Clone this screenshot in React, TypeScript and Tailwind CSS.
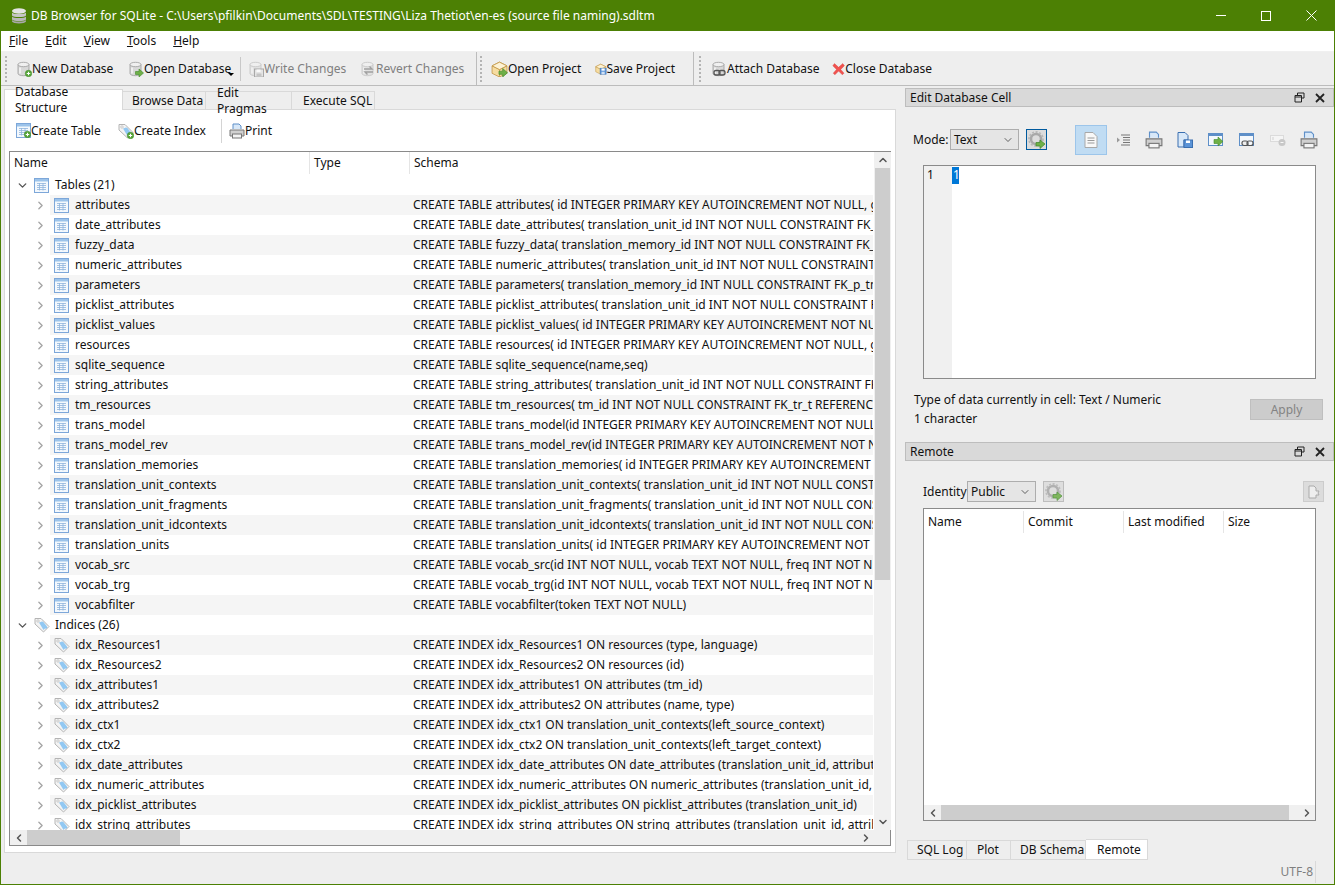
import React from "react";
import { ChevronDown, ChevronRight, ChevronLeft, ChevronUp } from "lucide-react";

// small icon parts
const PlusBadge = () => (
	<g>
		<circle cx="12.5" cy="12.5" r="3.2" fill="#5aa83c" stroke="#3f8a2a" strokeWidth="0.6" />
		<path d="M12.5 10.8v3.4M10.8 12.5h3.4" stroke="#fff" strokeWidth="1" />
	</g>
);
const ArrowBadge = () => (
	<path d="M7.5 10.5h3.5V8l4.5 4-4.500 4v-2.500H7.500z" fill="#6fb048" stroke="#3f8a2a" strokeWidth="0.6" />
);
const Cylinder = ({ faded = false }: { faded?: boolean }) => (
	<g opacity={faded ? 0.5 : 1}>
		<path d="M2 3.500v9c0 1.300 2.500 2.200 5.500 2.200s5.500-.9 5.500-2.200v-9z" fill="#d8d8d8" stroke="#9a9a9a" strokeWidth="0.8" />
		<ellipse cx="7.500" cy="3.500" rx="5.500" ry="2.200" fill="#f0f0f0" stroke="#9a9a9a" strokeWidth="0.8" />
		<path d="M4 6.500v6" stroke="#fff" strokeWidth="1.200" />
	</g>
);
const NewDbIcon = () => (
	<svg width="16" height="16" viewBox="0 0 16 16"><Cylinder /><PlusBadge /></svg>
);
const OpenDbIcon = () => (
	<svg width="16" height="16" viewBox="0 0 16 16"><Cylinder /><ArrowBadge /></svg>
);
const WriteIcon = () => (
	<svg width="16" height="16" viewBox="0 0 16 16">
		<Cylinder faded />
		<rect x="6.500" y="8" width="9" height="8" fill="#e4e4e4" stroke="#a8a8a8" />
		<rect x="8.500" y="8.500" width="4" height="2.500" fill="#fafafa" />
		<rect x="8.500" y="12.500" width="5" height="3" fill="#c4c4c4" />
	</svg>
);
const RevertIcon = () => (
	<svg width="16" height="16" viewBox="0 0 16 16">
		<Cylinder faded />
		<path d="M4 8h8l-2.500-2.500M13 11H5l2.500 2.500" fill="none" stroke="#a0a0a0" strokeWidth="1.400" />
	</svg>
);
const BoxBase = () => (
	<g>
		<path d="M1 5.500 8 2l7 3.500v7L8 16l-7-3.500z" fill="#f6dca0" stroke="#c49a4a" strokeWidth="0.8" />
		<path d="M1 5.500 8 9l7-3.500M8 9v7" fill="none" stroke="#c49a4a" strokeWidth="0.8" />
		<path d="M1 5.500 8 2l7 3.500L8 9z" fill="#fdf2d4" stroke="#c49a4a" strokeWidth="0.8" />
	</g>
);
const OpenProjectIcon = () => (
	<svg width="17" height="17" viewBox="0 0 16 16"><BoxBase /><ArrowBadge /></svg>
);
const SaveProjectIcon = () => (
	<svg width="17" height="17" viewBox="0 0 16 16">
		<BoxBase />
		<rect x="7" y="7.500" width="8.500" height="8.500" fill="#5b93d6" stroke="#3a6fb0" strokeWidth="0.6" />
		<rect x="9" y="8" width="4.500" height="3" fill="#fff" />
		<rect x="9" y="12.500" width="4.500" height="3.500" fill="#cfe0f4" />
	</svg>
);
const AttachIcon = () => (
	<svg width="16" height="16" viewBox="0 0 16 16">
		<Cylinder />
		<rect x="3" y="9.500" width="6" height="4.500" rx="2" fill="none" stroke="#555" strokeWidth="1.300" />
		<rect x="8" y="9.500" width="6" height="4.500" rx="2" fill="none" stroke="#555" strokeWidth="1.300" />
	</svg>
);
const CloseIcon = () => (
	<svg width="16" height="16" viewBox="0 0 16 16">
		<path d="M3 1.500 8 6l5-4.500L15 4l-4.500 4.500L14.500 13 12.500 15 8 10.500 3.500 15 1.500 13 5.500 8.500 1 4z" fill="#f0524f" stroke="#d8403c" strokeWidth="0.5" />
	</svg>
);
const TableIcon = ({ plus = false }: { plus?: boolean }) => (
	<svg width="15" height="15" viewBox="0 0 15 15" className="shrink-0">
		<rect x="0.500" y="0.500" width="14" height="14" fill="#f3f8fd" stroke="#7da7d9" />
		<rect x="1" y="1" width="13" height="2.500" fill="#9cc3ea" />
		<path d="M3 5.500h9M3 7.500h9M3 9.500h9M3 11.500h9M5.500 5v7.500M9 5v7.500" stroke="#8fb4dc" strokeWidth="0.800" fill="none" />
		{plus && (
			<g>
				<circle cx="11.500" cy="11.500" r="3.200" fill="#5aa83c" stroke="#3f8a2a" strokeWidth="0.600" />
				<path d="M11.500 9.800v3.400M9.800 11.500h3.400" stroke="#fff" />
			</g>
		)}
	</svg>
);
const TagIcon = ({ plus = false }: { plus?: boolean }) => (
	<svg width="16" height="16" viewBox="0 0 16 16" className="shrink-0">
		<path d="M1 1.500h6l8 8-5.500 5.500-8.500-8z" fill="#f4f4f4" stroke="#b4b4b4" />
		<path d="M6 6l6 6 1.500-1.500-6-6z" fill="#8ec4f0" />
		<path d="M5 5.500 9 4.500l4 5-3.500 3.500z" fill="#92c8f2" />
		<circle cx="4" cy="4" r="1.200" fill="#fff" stroke="#a8a8a8" strokeWidth="0.600" />
		{plus && <PlusBadge />}
	</svg>
);
const PrintIcon = ({ size = 16 }: { size?: number }) => (
	<svg width={size} height={size} viewBox="0 0 16 16" className="shrink-0">
		<path d="M4 6V1h6l2 2v3" fill="#d8e8f8" stroke="#5e8fc8" />
		<path d="M1 7h14v6H1z" fill="#d0d0d0" stroke="#777" />
		<rect x="3.500" y="11" width="9" height="4" fill="#f4f4f4" stroke="#777" />
	</svg>
);
const GearIcon = ({ faded = false }: { faded?: boolean }) => (
	<svg width="18" height="18" viewBox="0 0 18 18" opacity={faded ? 0.85 : 1}>
		<circle cx="8" cy="8" r="5" fill="none" stroke="#a8a8a8" strokeWidth="2.500" />
		<circle cx="8" cy="8" r="7" fill="none" stroke="#b8b8b8" strokeWidth="1.800" strokeDasharray="2 1.600" />
		<path d="M8 11.500h4V9l5 4-5 4.500V15H8z" fill="#6fb048" stroke="#3f8a2a" strokeWidth="0.700" />
	</svg>
);
const Grip = () => (
	<div className="w-[3px] h-[26px] border-l-[2px] border-dotted border-[#b4b4b4] shrink-0" />
);

const font = "font-['Noto_Sans',sans-serif]";

const ToolItem = ({ icon, label, w, off = false }: { icon: React.ReactNode; label: string; w: string; off?: boolean }) => (
	<div className={`flex items-center shrink-0 ${w} ${off ? "text-[#7f7f7f]" : "text-[#111]"}`}>
		{icon}
		<span className="whitespace-nowrap">{label}</span>
	</div>
);

const tables: [string, string][] = [
	["attributes", "CREATE TABLE attributes( id INTEGER PRIMARY KEY AUTOINCREMENT NOT NULL, guid BLOB NOT NULL"],
	["date_attributes", "CREATE TABLE date_attributes( translation_unit_id INT NOT NULL CONSTRAINT FK_da_tu REFERENCES"],
	["fuzzy_data", "CREATE TABLE fuzzy_data( translation_memory_id INT NOT NULL CONSTRAINT FK_fi1_tm REFERENCES"],
	["numeric_attributes", "CREATE TABLE numeric_attributes( translation_unit_id INT NOT NULL CONSTRAINT FK_na_tu REFERENCES"],
	["parameters", "CREATE TABLE parameters( translation_memory_id INT NULL CONSTRAINT FK_p_tm REFERENCES"],
	["picklist_attributes", "CREATE TABLE picklist_attributes( translation_unit_id INT NOT NULL CONSTRAINT FK_pa_tu REFERENCES"],
	["picklist_values", "CREATE TABLE picklist_values( id INTEGER PRIMARY KEY AUTOINCREMENT NOT NULL, guid BLOB NOT NULL"],
	["resources", "CREATE TABLE resources( id INTEGER PRIMARY KEY AUTOINCREMENT NOT NULL, guid BLOB NOT NULL"],
	["sqlite_sequence", "CREATE TABLE sqlite_sequence(name,seq)"],
	["string_attributes", "CREATE TABLE string_attributes( translation_unit_id INT NOT NULL CONSTRAINT FK_sa_tu REFERENCES"],
	["tm_resources", "CREATE TABLE tm_resources( tm_id INT NOT NULL CONSTRAINT FK_tr_t REFERENCES translation_memories"],
	["trans_model", "CREATE TABLE trans_model(id INTEGER PRIMARY KEY AUTOINCREMENT NOT NULL, source_id INT NOT NULL"],
	["trans_model_rev", "CREATE TABLE trans_model_rev(id INTEGER PRIMARY KEY AUTOINCREMENT NOT NULL, source_id INT NOT NULL"],
	["translation_memories", "CREATE TABLE translation_memories( id INTEGER PRIMARY KEY AUTOINCREMENT NOT NULL, guid BLOB"],
	["translation_unit_contexts", "CREATE TABLE translation_unit_contexts( translation_unit_id INT NOT NULL CONSTRAINT FK_tuc REFERENCES"],
	["translation_unit_fragments", "CREATE TABLE translation_unit_fragments( translation_unit_id INT NOT NULL CONSTRAINT FK_tuf REFERENCES"],
	["translation_unit_idcontexts", "CREATE TABLE translation_unit_idcontexts( translation_unit_id INT NOT NULL CONSTRAINT FK_tui REFERENCES"],
	["translation_units", "CREATE TABLE translation_units( id INTEGER PRIMARY KEY AUTOINCREMENT NOT NULL, guid BLOB NOT NULL"],
	["vocab_src", "CREATE TABLE vocab_src(id INT NOT NULL, vocab TEXT NOT NULL, freq INT NOT NULL)"],
	["vocab_trg", "CREATE TABLE vocab_trg(id INT NOT NULL, vocab TEXT NOT NULL, freq INT NOT NULL)"],
	["vocabfilter", "CREATE TABLE vocabfilter(token TEXT NOT NULL)"],
];

const indices: [string, string][] = [
	["idx_Resources1", "CREATE INDEX idx_Resources1 ON resources (type, language)"],
	["idx_Resources2", "CREATE INDEX idx_Resources2 ON resources (id)"],
	["idx_attributes1", "CREATE INDEX idx_attributes1 ON attributes (tm_id)"],
	["idx_attributes2", "CREATE INDEX idx_attributes2 ON attributes (name, type)"],
	["idx_ctx1", "CREATE INDEX idx_ctx1 ON translation_unit_contexts(left_source_context)"],
	["idx_ctx2", "CREATE INDEX idx_ctx2 ON translation_unit_contexts(left_target_context)"],
	["idx_date_attributes", "CREATE INDEX idx_date_attributes ON date_attributes (translation_unit_id, attribute_id)"],
	["idx_numeric_attributes", "CREATE INDEX idx_numeric_attributes ON numeric_attributes (translation_unit_id, attribute_id)"],
	["idx_picklist_attributes", "CREATE INDEX idx_picklist_attributes ON picklist_attributes (translation_unit_id)"],
	["idx_string_attributes", "CREATE INDEX idx_string_attributes ON string_attributes (translation_unit_id, attribute_id)"],
];

const GroupRow = ({ icon, label }: { icon: React.ReactNode; label: string }) => (
	<div className="h-5 flex items-center">
		<div className="w-[24px] flex justify-center pl-[-1px] shrink-0">
			<ChevronDown size={13} strokeWidth={2.500} className="text-[#555]" />
		</div>
		<div className="w-[21px] flex shrink-0">{icon}</div>
		<span>{label}</span>
	</div>
);

const ChildRow = ({ icon, name, schema, shaded }: { icon: React.ReactNode; name: string; schema: string; shaded: boolean }) => (
	<div className="h-5 flex items-center">
		<div className="w-[40px] flex justify-end pr-[3px] shrink-0">
			<ChevronRight size={13} strokeWidth={2.500} className="text-[#a6a6a6]" />
		</div>
		<div className={`w-[823px] h-5 flex items-center pl-[4px] overflow-hidden ${shaded ? "bg-[#f5f5f5]" : ""}`}>
			<div className="w-[21px] shrink-0 flex">{icon}</div>
			<div className="w-[338px] shrink-0 whitespace-nowrap">{name}</div>
			<div className="whitespace-nowrap">{schema}</div>
		</div>
	</div>
);

const HScroll = ({ thumb, gap }: { thumb: string; gap: string }) => (
	<div className="h-[15px] flex items-center bg-[#f0f0f0] shrink-0">
		<div className="w-[17px] flex justify-center shrink-0">
			<ChevronLeft size={12} strokeWidth={3} className="text-[#555]" />
		</div>
		<div className={`h-[15px] bg-[#cdcdcd] shrink-0 ${thumb}`} />
		<div className={gap} />
		<div className="w-[17px] flex justify-center shrink-0">
			<ChevronRight size={12} strokeWidth={3} className="text-[#555]" />
		</div>
	</div>
);

const DockHeader = ({ title }: { title: string }) => (
	<div className="h-[19px] bg-[#d9d9d9] border border-[#bdbdbd] flex items-center pl-[4px] shrink-0">
		<span className="flex-1 text-[#111]">{title}</span>
		<svg width="11" height="11" viewBox="0 0 11 11" className="mr-[10px]">
			<path d="M3.500 3V1h6.500v5H7.500M1 3.500h6.500V10H1zM1 5h6.500" fill="none" stroke="#222" />
		</svg>
		<svg width="10" height="10" viewBox="0 0 10 10" className="mr-[8px]">
			<path d="M1 1l8 8M9 1l-8 8" stroke="#222" strokeWidth="1.800" />
		</svg>
	</div>
);

const Combo = ({ label }: { label: string }) => (
	<div className="w-[69px] h-[21px] border border-[#adadad] bg-[#e5e5e5] flex items-center pl-[3px] shrink-0">
		<span className="flex-1 text-[#111]">{label}</span>
		<ChevronDown size={12} strokeWidth={1.500} className="mr-[4px] text-[#333]" />
	</div>
);

const HeaderCell = ({ w, label }: { w: string; label: string }) => (
	<div className={`${w} h-[22px] border-r border-[#e5e5e5] pl-[4px] flex items-center shrink-0`}>{label}</div>
);

const CellBtn = ({ children }: { children: React.ReactNode }) => (
	<div className="w-[31px] flex justify-center shrink-0">{children}</div>
);

export default function App() {
	return (
		<div className={`${font} w-[1335px] h-[885px] overflow-hidden bg-[#eeeeee] text-[12px] leading-[16px] text-[#111] border-x border-b border-[#4c8004] flex flex-col`}>
			{/* Title bar */}
			<div className="h-[31px] bg-[#4c8004] flex items-center text-white shrink-0">
				<svg width="18" height="18" viewBox="0 0 18 18" className="ml-[9px] mr-[3px]">
					<ellipse cx="9" cy="4" rx="7" ry="2.800" fill="#e4e4e4" />
					<path d="M2 5.500c1 2 13 2 14 0v3c-1 2-13 2-14 0z" fill="#c6c6c6" />
					<path d="M2 9.500c1 2 13 2 14 0v3c-1 2-13 2-14 0z" fill="#b8b8b8" />
					<path d="M2 13c1 2 13 2 14 0v1.500c-1 2.500-13 2.500-14 0z" fill="#a8a8a8" />
				</svg>
				<span className="whitespace-nowrap flex-1">DB Browser for SQLite - C:\Users\pfilkin\Documents\SDL\TESTING\Liza Thetiot\en-es (source file naming).sdltm</span>
				<div className="w-[45px] flex justify-center"><div className="w-[10px] h-px bg-white" /></div>
				<div className="w-[45px] flex justify-center"><div className="w-[10px] h-[10px] border border-white" /></div>
				<div className="w-[46px] flex justify-center">
					<svg width="11" height="11" viewBox="0 0 11 11"><path d="M.5.500l10 10M10.500.500l-10 10" stroke="#fff" /></svg>
				</div>
			</div>

			{/* Menu */}
			<div className="h-[21px] bg-white flex items-center gap-[17px] pl-[8px] border-b border-[#f0f0f0] shrink-0 text-[#111]">
				<span><u>F</u>ile</span>
				<span><u>E</u>dit</span>
				<span><u>V</u>iew</span>
				<span><u>T</u>ools</span>
				<span><u>H</u>elp</span>
			</div>

			{/* Toolbars */}
			<div className="h-[34px] flex items-center border-b border-[#bcbcbc] shrink-0">
				<div className="w-[693px] h-full flex items-center border-r border-[#bcbcbc] shrink-0">
					<div className="pl-[4px] w-[15px] shrink-0"><Grip /></div>
					<ToolItem icon={<NewDbIcon />} label="New Database" w="w-[112px]" />
					<div className="w-[112px] flex items-center shrink-0 relative">
						<OpenDbIcon />
						<span className="whitespace-nowrap">Open Database</span>
						<div className="absolute left-[100px] top-[12px] border-x-[3px] border-t-[3px] border-x-transparent border-t-black" />
					</div>
					<div className="w-px h-[24px] bg-[#c8c8c8] mr-[7px] shrink-0" />
					<ToolItem icon={<WriteIcon />} label="Write Changes" w="w-[112px]" off />
					<ToolItem icon={<RevertIcon />} label="Revert Changes" w="w-[116px]" off />
					<div className="w-px h-[33px] bg-[#bcbcbc] shrink-0" />
					<div className="pl-[3px] w-[14px] shrink-0"><Grip /></div>
					<ToolItem icon={<OpenProjectIcon />} label="Open Project" w="w-[104px]" />
					<ToolItem icon={<SaveProjectIcon />} label="Save Project" w="w-[80px]" />
				</div>
				<div className="pl-[5px] w-[17px] shrink-0"><Grip /></div>
				<ToolItem icon={<AttachIcon />} label="Attach Database" w="w-[121px]" />
				<ToolItem icon={<CloseIcon />} label="Close Database" w="w-[100px]" />
			</div>

			{/* Main */}
			<div className="flex-1 flex min-h-0">
				{/* Left pane */}
				<div className="w-[892px] ml-[3px] mt-[3px] shrink-0 flex flex-col">
					<div className="flex items-end h-[21px] relative z-10">
						<div className="w-[119px] h-[21px] bg-white border border-[#d9d9d9] border-b-0 pl-[10px] flex items-center shrink-0">Database Structure</div>
						<div className="w-[83px] h-[19px] border border-l-0 border-[#d9d9d9] pl-[9px] flex items-center shrink-0">Browse Data</div>
						<div className="w-[86px] h-[19px] border border-l-0 border-[#d9d9d9] pl-[11px] flex items-center shrink-0">Edit Pragmas</div>
						<div className="w-[83px] h-[19px] border border-l-0 border-[#d9d9d9] pl-[11px] flex items-center shrink-0">Execute SQL</div>
					</div>
					<div className="h-[744px] -mt-px bg-white border border-[#d9d9d9] px-[4px] pb-[6px] flex flex-col">
						{/* Structure toolbar */}
						<div className="h-[41px] flex items-center shrink-0 pl-[7px]">
							<ToolItem icon={<TableIcon plus />} label="Create Table" w="w-[102px]" />
							<div className="w-[103px] flex items-center shrink-0"><TagIcon plus /><span className="whitespace-nowrap">Create Index</span></div>
							<div className="w-px h-[24px] bg-[#d4d4d4] mr-[7px] shrink-0" />
							<ToolItem icon={<PrintIcon />} label="Print" w="w-[50px]" />
						</div>
						{/* Tree */}
						<div className="flex-1 border border-[#8a8a8a] flex flex-col min-h-0">
							<div className="flex-1 flex min-h-0">
								<div className="w-[864px] shrink-0 flex flex-col min-h-0">
									<div className="flex h-[23px] shrink-0">
										<HeaderCell w="w-[300px]" label="Name" />
										<HeaderCell w="w-[100px]" label="Type" />
										<div className="pl-[4px] h-[22px] flex items-center">Schema</div>
									</div>
									<div className="flex-1 overflow-hidden">
										<GroupRow icon={<TableIcon />} label="Tables (21)" />
										{tables.map(([n, s], i) => (
											<ChildRow key={n} icon={<TableIcon />} name={n} schema={s} shaded={i % 2 === 0} />
										))}
										<GroupRow icon={<TagIcon />} label="Indices (26)" />
										{indices.map(([n, s], i) => (
											<ChildRow key={n} icon={<TagIcon />} name={n} schema={s} shaded={i % 2 === 0} />
										))}
									</div>
								</div>
								<div className="w-[17px] shrink-0 bg-[#f0f0f0] flex flex-col items-center">
									<div className="h-[16px] flex items-center"><ChevronUp size={12} strokeWidth={3} className="text-[#555]" /></div>
									<div className="w-[15px] h-[412px] bg-[#cdcdcd]" />
									<div className="flex-1" />
									<div className="h-[16px] flex items-center"><ChevronDown size={12} strokeWidth={3} className="text-[#555]" /></div>
								</div>
							</div>
							<HScroll thumb="w-[153px]" gap="w-[677px]" />
						</div>
					</div>
				</div>

				{/* Right docks */}
				<div className="w-[429px] ml-[9px] mt-[2px] shrink-0 flex flex-col">
					<DockHeader title="Edit Database Cell" />
					<div className="h-[335px] pl-[18px] pr-[9px] flex flex-col shrink-0">
						<div className="h-[41px] -ml-[10px] flex items-center mt-[12px] shrink-0">
							<span className="w-[37px] shrink-0">Mode:</span>
							<Combo label="Text" />
							<div className="w-[21px] h-[21px] ml-[7px] border border-[#005a9e] bg-[#dcdcdc] flex items-center justify-center shrink-0"><GearIcon /></div>
							<div className="w-[32px] h-[30px] ml-[28px] bg-[#c0dcf3] border border-[#9cc5ea] flex items-center justify-center shrink-0">
								<svg width="14" height="16" viewBox="0 0 14 16"><path d="M1 .5h8l4 4v11H1z" fill="#f8f8f8" stroke="#a8a8a8" /><path d="M3.500 6h7M3.500 8.500h7M3.500 11h7" stroke="#9a9a9a" /></svg>
							</div>
							<CellBtn>
								<svg width="14" height="12" viewBox="0 0 14 12"><path d="M5 1h9M7 3.500h7M7 6h7M7 8.500h7M5 11h9" stroke="#777" /><path d="M1 3.500 4 6 1 8.500z" fill="#9a9a9a" /></svg>
							</CellBtn>
							<CellBtn><PrintIcon size={18} /></CellBtn>
							<CellBtn>
								<svg width="16" height="16" viewBox="0 0 16 16"><path d="M1 .5h7l3 3V8H7v7H1z" fill="#d8e8f8" stroke="#3a6fb0" /><rect x="7" y="8" width="8.500" height="7.500" fill="#5b93d6" stroke="#3a6fb0" /><rect x="9" y="8.500" width="4" height="2.500" fill="#fff" /></svg>
							</CellBtn>
							<CellBtn>
								<svg width="16" height="16" viewBox="0 0 16 16"><rect x=".5" y="1.500" width="14" height="12" fill="#f4f8fc" stroke="#5e8fc8" /><rect x="1" y="2" width="13" height="2" fill="#5e8fc8" /><path d="M6 7.500h4V5l5 4.500-5 4.500v-2.500H6z" fill="#6fb048" stroke="#3f8a2a" strokeWidth=".6" /></svg>
							</CellBtn>
							<CellBtn>
								<svg width="16" height="16" viewBox="0 0 16 16"><rect x=".5" y="1.500" width="14" height="12" fill="#f4f8fc" stroke="#5e8fc8" /><rect x="1" y="2" width="13" height="2" fill="#5e8fc8" /><rect x="3" y="9" width="6" height="4.500" rx="2" fill="#eee" stroke="#555" strokeWidth="1.200" /><rect x="8" y="9" width="6" height="4.500" rx="2" fill="none" stroke="#555" strokeWidth="1.200" /></svg>
							</CellBtn>
							<CellBtn>
								<svg width="16" height="16" viewBox="0 0 16 16" opacity=".6"><rect x=".5" y="3.500" width="13" height="6" fill="#fafafa" stroke="#d0d0d0" /><path d="M3 5v3" stroke="#c0c0c0" /><circle cx="12" cy="10.500" r="3.500" fill="#b0b0b0" /><path d="M10.500 10.500h3" stroke="#fff" /></svg>
							</CellBtn>
							<CellBtn><PrintIcon size={18} /></CellBtn>
						</div>
						{/* Editor */}
						<div className="h-[214px] w-[393px] mt-[5px] border border-[#8a8a8a] bg-white flex shrink-0">
							<div className="w-[28px] bg-[#f0f0f0] pl-[3px] pt-px">1</div>
							<div className="pt-px"><span className="inline-block bg-[#0078d7] text-white w-[7px] h-[17px] pl-px">1</span></div>
						</div>
						<div className="flex -ml-[10px] mt-[13px] pr-[2px] shrink-0">
							<div className="flex-1 flex flex-col gap-[3px] pl-[1px]">
								<span>Type of data currently in cell: Text / Numeric</span>
								<span>1 character</span>
							</div>
							<div className="w-[73px] h-[21px] mt-[7px] bg-[#cccccc] border border-[#bfbfbf] text-[#838383] flex items-center justify-center">Apply</div>
						</div>
					</div>
					<DockHeader title="Remote" />
					<div className="pl-[18px] pr-[9px] flex flex-col flex-1 min-h-0">
						<div className="h-[21px] flex items-center mt-[20px] shrink-0">
							<span className="w-[44px] shrink-0">Identity</span>
							<Combo label="Public" />
							<div className="w-[21px] h-[21px] ml-[7px] border border-[#bdbdbd] bg-[#dedede] flex items-center justify-center shrink-0"><GearIcon faded /></div>
							<div className="flex-1" />
							<div className="w-[21px] h-[21px] mr-px bg-[#dcdcdc] border border-[#cccccc] flex items-center justify-center shrink-0">
								<svg width="14" height="14" viewBox="0 0 14 14"><path d="M2 1h5l2 2v3h3l-1 2 1 2H9v3H2z" fill="#eee" stroke="#aaa" /></svg>
							</div>
						</div>
						<div className="h-[313px] w-[393px] mt-[6px] border border-[#8a8a8a] bg-white flex flex-col shrink-0">
							<div className="flex h-[22px] mt-[2px] shrink-0">
								<HeaderCell w="w-[100px]" label="Name" />
								<HeaderCell w="w-[100px]" label="Commit" />
								<HeaderCell w="w-[100px]" label="Last modified" />
								<div className="pl-[4px] h-[22px] flex items-center">Size</div>
							</div>
							<div className="flex-1" />
							<HScroll thumb="w-[348px]" gap="w-[9px]" />
						</div>
						<div className="flex-1" />
						<div className="flex items-end h-[21px] -ml-[16px] shrink-0">
							<div className="w-[60px] h-[20px] border border-[#d9d9d9] pl-[9px] flex items-center shrink-0">SQL Log</div>
							<div className="w-[44px] h-[20px] border border-l-0 border-[#d9d9d9] pl-[10px] flex items-center shrink-0">Plot</div>
							<div className="w-[75px] h-[20px] border border-l-0 border-[#d9d9d9] pl-[9px] flex items-center shrink-0">DB Schema</div>
							<div className="w-[62px] h-[21px] bg-white border border-l-0 border-[#d9d9d9] pl-[11px] flex items-center shrink-0">Remote</div>
						</div>
					</div>
				</div>
			</div>

			{/* Status */}
			<div className="h-[24px] flex items-center justify-end shrink-0 text-[#7f7f7f]">
				<span className="mr-[2px]">UTF-8</span>
				<div className="w-px h-[22px] bg-[#d9d9d9] mr-[18px]" />
			</div>
		</div>
	);
}
